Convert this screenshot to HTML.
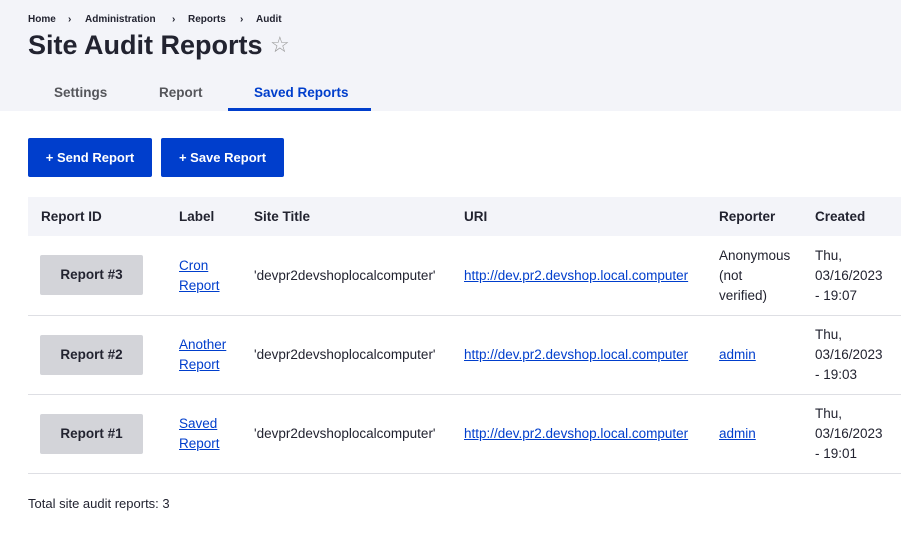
<!DOCTYPE html>
<html><head><meta charset="utf-8"><style>
*{margin:0;padding:0;box-sizing:border-box}
body{width:901px;height:540px;background:#fff;font-family:"Liberation Sans",sans-serif;color:#222330;position:relative;overflow:hidden;font-size:13.5px}
.a{position:absolute;white-space:nowrap}
.hdr{position:absolute;left:0;top:0;width:901px;height:111px;background:#f3f4f9}
.bc{top:14px;font-size:10px;font-weight:bold;color:#222330}
h1{position:absolute;left:28px;top:30px;font-size:27px;font-weight:bold;color:#222330;letter-spacing:0}
.tab{top:85px;font-size:13.5px;font-weight:bold;color:#55565b}
.btn{position:absolute;top:138px;height:39px;background:#003ecc;color:#fff;font-weight:bold;font-size:13px;line-height:39px;text-align:center;border-radius:2px}
.th{position:absolute;left:28px;top:197px;width:873px;height:39px;background:#f3f4f9}
.h{top:209px;font-weight:bold;font-size:13.5px}
.line{position:absolute;left:28px;width:873px;height:1px;background:#dedfe4}
.rb{position:absolute;left:40px;width:103px;height:40px;background:#d3d4d9;border-radius:2px;font-weight:bold;line-height:40px;text-align:center;font-size:13.5px}
a{color:#003ecc;text-decoration:underline}
.ml{line-height:20px;font-size:13.5px}
</style></head><body>
<div class="hdr"></div>
<div class="a bc" style="left:28px">Home</div>
<div class="a bc" style="left:68px">›</div>
<div class="a bc" style="left:85px">Administration</div>
<div class="a bc" style="left:172px">›</div>
<div class="a bc" style="left:188px">Reports</div>
<div class="a bc" style="left:240px">›</div>
<div class="a bc" style="left:256px">Audit</div>
<h1>Site Audit Reports <span style="font-weight:normal;color:#999;font-size:22px;vertical-align:2px">☆</span></h1>
<div class="a tab" style="left:54px">Settings</div>
<div class="a tab" style="left:159px">Report</div>
<div class="a tab" style="left:254px;color:#003ecc">Saved Reports</div>
<div class="a" style="left:228px;top:108px;width:143px;height:3px;background:#003ecc"></div>
<div class="btn" style="left:28px;width:124px">+ Send Report</div>
<div class="btn" style="left:161px;width:123px">+ Save Report</div>
<div class="th"></div>
<div class="a h" style="left:41px">Report ID</div>
<div class="a h" style="left:179px">Label</div>
<div class="a h" style="left:254px">Site Title</div>
<div class="a h" style="left:464px">URI</div>
<div class="a h" style="left:719px">Reporter</div>
<div class="a h" style="left:815px">Created</div>

<div class="rb" style="top:255px">Report #3</div>
<div class="a ml" style="left:179px;top:256px"><a>Cron</a><br><a>Report</a></div>
<div class="a ml" style="left:254px;top:266px">'devpr2devshoplocalcomputer'</div>
<div class="a ml" style="left:464px;top:266px"><a>http://dev.pr2.devshop.local.computer</a></div>
<div class="a ml" style="left:719px;top:246px">Anonymous<br>(not<br>verified)</div>
<div class="a ml" style="left:815px;top:246px">Thu,<br>03/16/2023<br>- 19:07</div>
<div class="line" style="top:315px"></div>

<div class="rb" style="top:335px">Report #2</div>
<div class="a ml" style="left:179px;top:335px"><a>Another</a><br><a>Report</a></div>
<div class="a ml" style="left:254px;top:345px">'devpr2devshoplocalcomputer'</div>
<div class="a ml" style="left:464px;top:345px"><a>http://dev.pr2.devshop.local.computer</a></div>
<div class="a ml" style="left:719px;top:345px"><a>admin</a></div>
<div class="a ml" style="left:815px;top:325px">Thu,<br>03/16/2023<br>- 19:03</div>
<div class="line" style="top:394px"></div>

<div class="rb" style="top:414px">Report #1</div>
<div class="a ml" style="left:179px;top:414px"><a>Saved</a><br><a>Report</a></div>
<div class="a ml" style="left:254px;top:424px">'devpr2devshoplocalcomputer'</div>
<div class="a ml" style="left:464px;top:424px"><a>http://dev.pr2.devshop.local.computer</a></div>
<div class="a ml" style="left:719px;top:424px"><a>admin</a></div>
<div class="a ml" style="left:815px;top:404px">Thu,<br>03/16/2023<br>- 19:01</div>
<div class="line" style="top:473px"></div>

<div class="a" style="left:28px;top:496px;font-size:13px">Total site audit reports: 3</div>
</body></html>
